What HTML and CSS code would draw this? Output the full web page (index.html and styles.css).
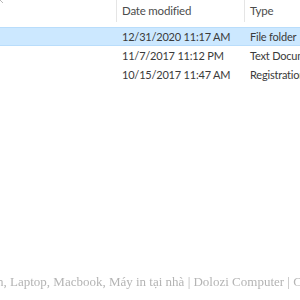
FILE: index.html
```html
<!DOCTYPE html>
<html lang="en">
<head>
  <meta charset="UTF-8">
  <meta name="viewport" content="width=device-width, initial-scale=1.0">
  <title>Explorer details</title>
  <link rel="stylesheet" href="styles.css">
</head>
<body>
  <div class="page">
    <div class="list">
      <div class="head">
        <div class="col name">
          <svg class="sort" width="8" height="6" viewBox="0 0 8 6"><path d="M0 5 L4 1 L8 5" fill="none" stroke="#b8b8b8" stroke-width="1"/></svg>
        </div>
        <div class="col">Date modified</div>
        <div class="col">Type</div>
      </div>
      <div class="row selected">
        <div class="cell"></div>
        <div class="cell">12/31/2020 11:17 AM</div>
        <div class="cell">File folder</div>
      </div>
      <div class="row">
        <div class="cell"></div>
        <div class="cell">11/7/2017 11:12 PM</div>
        <div class="cell">Text Document</div>
      </div>
      <div class="row">
        <div class="cell"></div>
        <div class="cell">10/15/2017 11:47 AM</div>
        <div class="cell">Registration Entries</div>
      </div>
    </div>
    <p class="caption">n, Laptop, Macbook, Máy in tại nhà | Dolozi Computer | Cung cấp</p>
  </div>
</body>
</html>
```
FILE: styles.css
```css
/* Explorer details view, cropped */
body {
  margin: 0;
  background: #fff;
}
.page {
  width: 300px;
  height: 300px;
  overflow: hidden;
  font-family: "Lato", "Open Sans", sans-serif;
}
.head, .row {
  display: grid;
  grid-template-columns: 116px 128px 1fr;
  white-space: nowrap;
}
.head {
  height: 22px;
  margin-bottom: 5px;
}
.col {
  border-left: 1px solid #e5e5e5;
  padding: 4px 0 0 5px;
  font-size: 11.5px;
  letter-spacing: -0.2px;
  color: #4c4c4c;
  overflow: hidden;
}
.col.name {
  border-left: none;
  padding: 0;
}
.sort {
  display: block;
  margin: -2px 0 0 -5px;
}
.row {
  box-sizing: border-box;
  height: 19px;
  border-top: 1px solid transparent;
  border-bottom: 1px solid transparent;
}
.row.selected {
  background: #cce8ff;
  border-color: #b9ddfb;
}
.cell {
  padding: 2px 0 0 6px;
  font-size: 11px;
  letter-spacing: -0.2px;
  color: #3a3a3a;
  overflow: hidden;
}
.caption {
  margin: 190px 0 0 -3px;
  font-family: "Liberation Serif", "DejaVu Serif", serif;
  font-size: 13px;
  color: #b4b4b4;
  white-space: nowrap;
  filter: blur(0.4px);
}
```
